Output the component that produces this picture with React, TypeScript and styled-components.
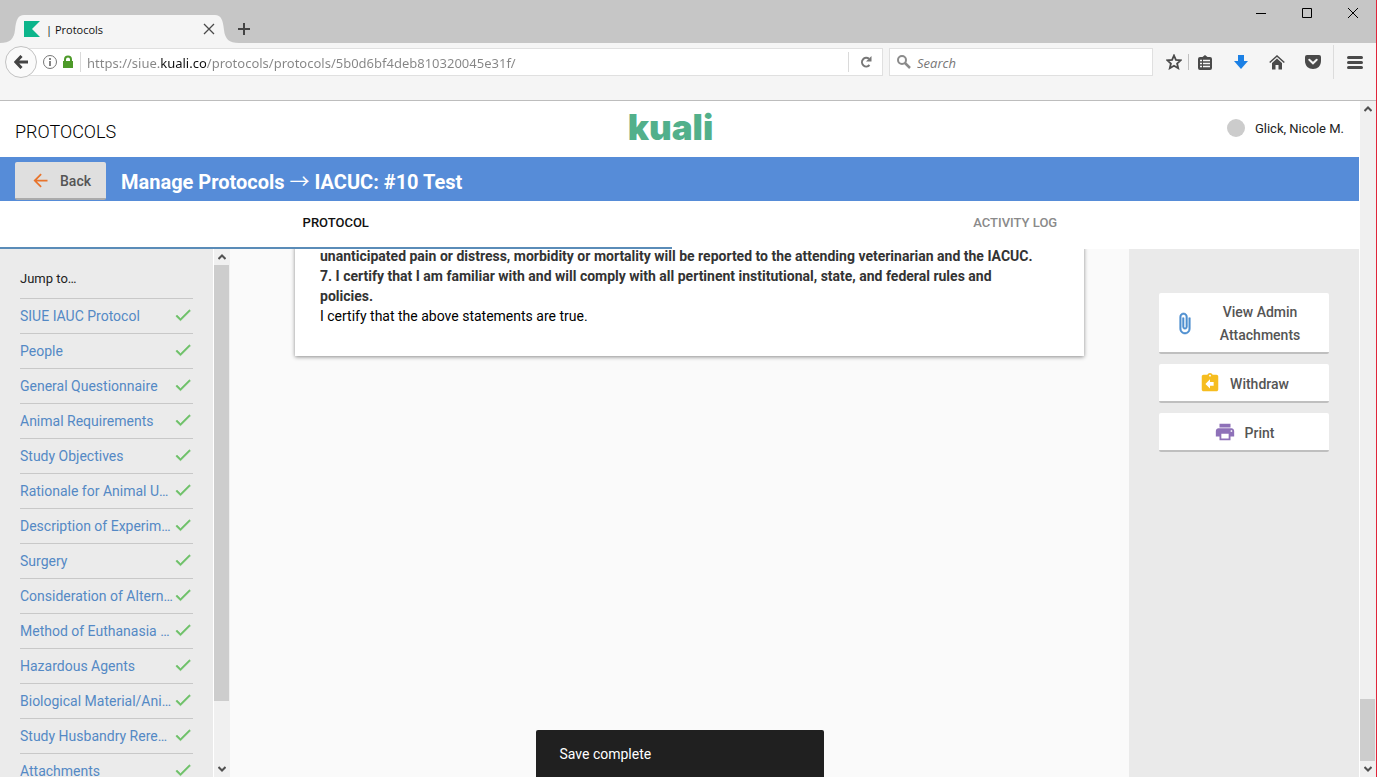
import React from 'react';
import styled, { createGlobalStyle, css } from 'styled-components';
import { MdArrowBack, MdAssignmentReturn, MdPrint } from 'react-icons/md';

const GlobalStyle = createGlobalStyle`
  *, *::before, *::after { box-sizing: border-box; }
  body { margin: 0; overflow: hidden; font-family: Roboto, "Liberation Sans", sans-serif; font-size: 14px; color: #222; }
  button { font: inherit; cursor: pointer; }
  ul { list-style: none; margin: 0; padding: 0; }
`;

const chromeFont = css`
  font-family: "Open Sans", "Noto Sans", sans-serif;
`;

const Frame = styled.div`
  display: flex;
  flex-direction: column;
  height: 100vh;
  border-right: 1px solid #e0253a;
  background: #fff;
`;

/* Browser window */

const TabStrip = styled.div`
  ${chromeFont}
  display: flex;
  align-items: flex-end;
  flex: none;
  height: 43px;
  background: #c6c6c6;
`;

const TabEdge = styled.svg<{ $flip?: boolean }>`
  flex: none;
  width: 24px;
  height: 28px;
  fill: #f5f5f5;
  transform: ${(p) => (p.$flip ? 'scaleX(-1)' : 'none')};
`;

const BrowserTab = styled.div`
  display: flex;
  align-items: center;
  width: 191px;
  height: 28px;
  background: #f5f5f5;
  font-size: 11px;
  color: #111;
`;

const TabTitle = styled.span`
  flex: 1;
  margin-left: 6px;
`;

const BareButton = styled.button`
  display: flex;
  align-items: center;
  justify-content: center;
  flex: none;
  padding: 0;
  border: 0;
  background: none;
  color: #4a4a4a;
`;

const NewTabButton = styled(BareButton)`
  width: 20px;
  height: 28px;
  margin-left: -5px;
`;

const WindowControls = styled.div`
  display: flex;
  align-self: flex-start;
  margin-left: auto;
`;

const WindowButton = styled(BareButton)`
  width: 46px;
  height: 26px;
  color: #000;
`;

const NavBar = styled.div`
  ${chromeFont}
  display: flex;
  align-items: flex-start;
  flex: none;
  height: 58px;
  padding: 5px 0 0 5px;
  border-bottom: 1px solid #bdbdbd;
  background: #f5f5f5;
`;

const BackCircle = styled(BareButton)`
  z-index: 1;
  width: 32px;
  height: 32px;
  margin: -2px -16px 0 0;
  border: 1px solid #c2c2c2;
  border-radius: 50%;
  background: #fafafa;
`;

const Field = styled.div`
  display: flex;
  align-items: center;
  min-width: 0;
  height: 28px;
  border: 1px solid #e0e0e0;
  background: #fff;
`;

const AddressField = styled(Field)`
  flex: 1;
  padding-left: 20px;
  margin-right: 6px;
`;

const SearchField = styled(Field)`
  flex: none;
  width: 264px;
  padding-left: 7px;
`;

const FieldRule = styled.span`
  flex: none;
  width: 1px;
  height: 20px;
  background: #dadada;
`;

const FieldInput = styled.input`
  flex: 1;
  min-width: 0;
  height: 26px;
  margin-left: 6px;
  padding: 2px 0 0;
  border: 0;
  outline: 0;
  background: none;
  font: inherit;
  font-size: 13px;
`;

/* The host name is darker than the rest of the address. */
const AddressInput = styled(FieldInput)`
  font-family: "Noto Sans", "Open Sans", sans-serif;
  color: #777;
  background: linear-gradient(90deg, #858585 73px, #111 73px, #111 119px, #858585 119px);
  background-clip: text;
  -webkit-background-clip: text;
  -webkit-text-fill-color: transparent;
`;

const SearchInput = styled(FieldInput)`
  font-style: italic;
  &::placeholder { color: #777; opacity: 1; }
`;

const ReloadButton = styled(BareButton)`
  width: 33px;
  height: 26px;
  color: #777;
`;

const ToolButtons = styled.div`
  display: flex;
  align-items: center;
  height: 28px;
  padding-left: 6px;
`;

const ToolButton = styled(BareButton)<{ $w: number }>`
  width: ${(p) => p.$w}px;
  height: 28px;
`;

const ToolRule = styled.span<{ $tall?: boolean }>`
  flex: none;
  width: 1px;
  height: ${(p) => (p.$tall ? 34 : 16)}px;
  background: ${(p) => (p.$tall ? '#dcdcdc' : '#c0c0c0')};
`;

/* Scroll bars */

const Scrollbar = styled.div`
  display: flex;
  flex-direction: column;
  align-items: center;
  flex: none;
  width: 17px;
  border: solid #fff;
  border-width: 0 0 0 1px;
  background: #f0f0f0;
`;

const ScrollArrow = styled(BareButton)`
  width: 16px;
  height: 16px;
  color: #505050;
`;

const ScrollTrack = styled.div<{ $end?: boolean }>`
  display: flex;
  flex: 1;
  align-self: stretch;
  flex-direction: column;
  justify-content: ${(p) => (p.$end ? 'flex-end' : 'flex-start')};
`;

const ScrollThumb = styled.div<{ $share: number }>`
  height: calc(100% * ${(p) => p.$share});
  margin-right: 1px;
  background: #cdcdcd;
`;

/* Application */

const Viewport = styled.div`
  display: flex;
  flex: 1;
  min-height: 0;
`;

const Page = styled.div`
  position: relative;
  display: flex;
  flex: 1;
  flex-direction: column;
  min-width: 0;
`;

const Header = styled.header`
  display: grid;
  grid-template-columns: 1fr auto 1fr;
  align-items: center;
  flex: none;
  height: 56px;
  padding: 0 15px;
`;

const AppName = styled.div`
  padding-top: 4px;
  font-size: 18px;
  font-weight: 300;
  color: #000;
`;

const Logo = styled.div`
  padding: 0 18px 4px 0;
  font-family: Inter, sans-serif;
  font-size: 35px;
  font-weight: 900;
  line-height: 44px;
  color: #52b08b;
`;

const User = styled.div`
  display: flex;
  align-items: center;
  justify-self: end;
  gap: 10px;
  padding-bottom: 2px;
  font-size: 13px;
`;

const Avatar = styled.span`
  width: 18px;
  height: 18px;
  border-radius: 50%;
  background: #ccc;
`;

const TitleBar = styled.div`
  display: flex;
  align-items: flex-start;
  flex: none;
  gap: 15px;
  height: 44px;
  padding: 5px 15px 0;
  background: #568cd8;
`;

const raised = css`
  display: flex;
  align-items: center;
  border: 0;
  border-radius: 2px;
  font-size: 14px;
  font-weight: 500;
  color: #555;
  svg { flex: none; margin-bottom: 2px; }
`;

const BackButton = styled.button`
  ${raised}
  gap: 9px;
  height: 38px;
  padding: 2px 15px 0;
  border-bottom: 2px solid #ababab;
  background: #dfdfdf;
  svg { color: #e8742c; }
`;

const Title = styled.h1`
  margin: 0;
  font-size: 20px;
  font-weight: 700;
  line-height: 40px;
  color: #fff;
`;

const Arrow = styled.span`
  font-family: "Noto Sans CJK JP", sans-serif;
  font-weight: 400;
  line-height: 20px;
`;

const Tabs = styled.nav`
  display: flex;
  flex: none;
  height: 48px;
`;

const Tab = styled.a<{ $active?: boolean }>`
  flex: 1;
  margin-right: 8px;
  border-bottom: 2px solid ${(p) => (p.$active ? '#5a8cb8' : 'transparent')};
  font-size: 13px;
  font-weight: 500;
  line-height: 44px;
  text-align: center;
  text-decoration: none;
  color: ${(p) => (p.$active ? '#111' : '#8a8a8a')};
`;

const Columns = styled.div`
  display: flex;
  flex: 1;
  min-height: 0;
`;

const Sidebar = styled.aside`
  flex: none;
  width: 213px;
  padding: 10px 20px 0;
  overflow: hidden;
  background: #ebebeb;
`;

const JumpHeading = styled.div`
  height: 40px;
  border-bottom: 1px solid #c8c8c8;
  font-size: 13px;
  line-height: 40px;
`;

const JumpItem = styled.li`
  display: flex;
  align-items: center;
  justify-content: space-between;
  height: 35px;
  border-bottom: 1px solid #c8c8c8;
  svg { flex: none; margin-bottom: 2px; }
`;

const JumpLink = styled.a`
  white-space: nowrap;
  text-decoration: none;
  color: #5489c5;
`;

const Main = styled.main`
  flex: 1;
  min-width: 0;
  padding: 0 45px 0 65px;
  overflow: hidden;
  background: #fafafa;
`;

const Card = styled.section`
  margin-top: -3px;
  padding: 0 40px 30px 25px;
  background: #fff;
  box-shadow: 0 1px 4px rgba(0, 0, 0, 0.45);
  line-height: 20px;
`;

const Clause = styled.p<{ $bold?: boolean }>`
  margin: 0;
  font-weight: ${(p) => (p.$bold ? 700 : 400)};
  color: ${(p) => (p.$bold ? '#333' : '#000')};
`;

const Actions = styled.aside`
  display: flex;
  flex-direction: column;
  flex: none;
  gap: 10px;
  width: 230px;
  padding: 44px 30px 0;
  background: #eaeaea;
`;

const ActionButton = styled.button<{ $tint: string }>`
  ${raised}
  justify-content: center;
  gap: 9px;
  min-height: 39px;
  padding: 8px 15px 5px;
  border-bottom: 2px solid #bfbfbf;
  background: #fff;
  line-height: 23px;
  svg { color: ${(p) => p.$tint}; }
`;

const WrappedLabel = styled.span`
  flex: 1;
  padding: 0 15px;
`;

const Toast = styled.div`
  position: absolute;
  bottom: 0;
  left: 50%;
  width: 288px;
  height: 47px;
  padding: 0 24px;
  transform: translateX(-50%);
  border-radius: 2px 2px 0 0;
  background: #202020;
  line-height: 49px;
  color: #fff;
`;

const sections = [
  'SIUE IAUC Protocol',
  'People',
  'General Questionnaire',
  'Animal Requirements',
  'Study Objectives',
  'Rationale for Animal U…',
  'Description of Experim…',
  'Surgery',
  'Consideration of Altern…',
  'Method of Euthanasia …',
  'Hazardous Agents',
  'Biological Material/Ani…',
  'Study Husbandry Rere…',
  'Attachments',
];

function CheckIcon() {
  return (
    <svg width="20" height="20" viewBox="0 0 24 24" fill="#6cc067" stroke="#6cc067" strokeWidth="0.6">
      <path d="M9 16.17L4.830 12L3.410 13.410L9 19L21 7L19.590 5.590Z" />
    </svg>
  );
}

function PaperclipIcon() {
  return (
    <svg width="23" height="23" viewBox="0 0 24 24" fill="currentColor" stroke="currentColor" strokeWidth="0.6">
      <path d="M16.5 6v11.5c0 2.210-1.790 4-4 4s-4-1.790-4-4V5a2.500 2.500 0 0 1 5 0v10.500c0 .55-.45 1-1 1s-1-.45-1-1V6H10v9.500a2.500 2.500 0 0 0 5 0V5c0-2.210-1.790-4-4-4S7 2.790 7 5v12.500c0 3.040 2.460 5.500 5.500 5.500s5.500-2.460 5.500-5.500V6h-1.500z" />
    </svg>
  );
}

function Chevron({ down }: { down?: boolean }) {
  return (
    <svg width="8" height="6" viewBox="0 0 8 6" fill="none" stroke="currentColor" strokeWidth="2">
      <path d={down ? 'M0.5 1L4 4.5L7.5 1' : 'M0.5 5L4 1.5L7.5 5'} />
    </svg>
  );
}

function ScrollBar({ share, end }: { share: number; end?: boolean }) {
  return (
    <Scrollbar>
      <ScrollArrow aria-label="Scroll up"><Chevron /></ScrollArrow>
      <ScrollTrack $end={end}><ScrollThumb $share={share} /></ScrollTrack>
      <ScrollArrow aria-label="Scroll down"><Chevron down /></ScrollArrow>
    </Scrollbar>
  );
}

function BrowserChrome() {
  return (
    <>
      <TabStrip>
        <TabEdge viewBox="0 0 24 28"><path d="M0 28C10 28 14 24 15 15C16 5 18 0 24 0V28Z" /></TabEdge>
        <BrowserTab>
          <svg width="16" height="16" viewBox="0 0 16 16"><path d="M0 0H16L8 8L16 16H0Z" fill="#0cb58b" /></svg>
          <TabTitle>| Protocols</TabTitle>
          <BareButton aria-label="Close tab">
            <svg width="12" height="12" viewBox="0 0 12 12" stroke="currentColor" strokeWidth="1.3"><path d="M1 1L11 11M11 1L1 11" /></svg>
          </BareButton>
        </BrowserTab>
        <TabEdge $flip viewBox="0 0 24 28"><path d="M0 28C10 28 14 24 15 15C16 5 18 0 24 0V28Z" /></TabEdge>
        <NewTabButton aria-label="New tab">
          <svg width="12" height="12" viewBox="0 0 12 12" stroke="#444" strokeWidth="2"><path d="M6 0V12M0 6H12" /></svg>
        </NewTabButton>
        <WindowControls>
          <WindowButton aria-label="Minimize"><svg width="10" height="10" stroke="currentColor"><path d="M0 5.5H10" /></svg></WindowButton>
          <WindowButton aria-label="Maximize"><svg width="10" height="10" fill="none" stroke="currentColor"><path d="M.5 .5H9.5V9.5H.5Z" /></svg></WindowButton>
          <WindowButton aria-label="Close"><svg width="10" height="10" stroke="currentColor"><path d="M0 0L10 10M10 0L0 10" /></svg></WindowButton>
        </WindowControls>
      </TabStrip>
      <NavBar>
        <BackCircle aria-label="Go back">
          <svg width="14" height="14" viewBox="0 0 14 14" fill="none" stroke="#444" strokeWidth="3"><path d="M7.5 1L1.8 7L7.5 13M2 7H14" /></svg>
        </BackCircle>
        <AddressField>
          <BareButton aria-label="Site information">
            <svg width="16" height="16" viewBox="0 0 16 16" fill="none" stroke="#777"><circle cx="8" cy="8" r="6.5" /><path d="M8 7V12M8 4V6" strokeWidth="1.8" /></svg>
          </BareButton>
          <BareButton aria-label="Secure connection">
            <svg width="22" height="14" viewBox="0 0 22 14"><path d="M5 6H15V13H5Z" fill="#4d9a29" /><path d="M7 7V4.5C7 .6 13 .6 13 4.5V7" fill="none" stroke="#4d9a29" strokeWidth="2" /></svg>
          </BareButton>
          <FieldRule />
          <AddressInput aria-label="Address" defaultValue="https://siue.kuali.co/protocols/protocols/5b0d6bf4deb810320045e31f/" />
          <FieldRule />
          <ReloadButton aria-label="Reload">
            <svg width="12" height="12" viewBox="0 0 12 12"><path d="M9 2.8A4.3 4.3 0 1 0 9.5 9" fill="none" stroke="currentColor" strokeWidth="2" /><path d="M11.5 0V5.5H6Z" fill="currentColor" /></svg>
          </ReloadButton>
        </AddressField>
        <SearchField>
          <svg width="14" height="14" viewBox="0 0 14 14" fill="none" stroke="#8b8b8b"><circle cx="5" cy="5" r="4" strokeWidth="2" /><path d="M8 8L13 13" strokeWidth="2.5" /></svg>
          <SearchInput aria-label="Search" placeholder="Search" />
        </SearchField>
        <ToolButtons>
          <ToolButton $w={29} aria-label="Bookmark this page">
            <svg width="16" height="16" viewBox="0 0 16 16" fill="none" stroke="#4a4a4a" strokeWidth="1.8"><path d="M8 1.5L9.9 5.9L14.7 6.3L11.1 9.5L12.2 14.2L8 11.7L3.8 14.2L4.9 9.5L1.3 6.3L6.1 5.9Z" /></svg>
          </ToolButton>
          <ToolRule />
          <ToolButton $w={32} aria-label="Library">
            <svg width="14" height="15" viewBox="0 0 14 15"><path d="M2 2H4.5L7 0L9.5 2H12Q14 2 14 4V13Q14 15 12 15H2Q0 15 0 13V4Q0 2 2 2Z" fill="#4a4a4a" /><path d="M2 5.5H4M5 5.5H12M2 8.5H4M5 8.5H12M2 11.5H4M5 11.5H12" stroke="#f5f5f5" strokeWidth="1.6" /></svg>
          </ToolButton>
          <ToolButton $w={40} aria-label="Downloads">
            <svg width="14" height="14" viewBox="0 0 14 14"><path d="M4 0H10V6H14L7 14L0 6H4Z" fill="#1b80e5" /></svg>
          </ToolButton>
          <ToolButton $w={32} aria-label="Home">
            <svg width="16" height="15" viewBox="0 0 16 15"><path d="M.7 7.5L8 1L15.3 7.5" fill="none" stroke="#4a4a4a" strokeWidth="1.5" /><path d="M8 3.5L13 8V14.5H9.5V10H6.5V14.5H3V8Z" fill="#4a4a4a" /></svg>
          </ToolButton>
          <ToolButton $w={40} aria-label="Save to Pocket">
            <svg width="16" height="14" viewBox="0 0 16 14"><path d="M2 0H14Q16 0 16 2V6C16 11 12.5 14 8 14C3.5 14 0 11 0 6V2Q0 0 2 0Z" fill="#4a4a4a" /><path d="M4.3 4.8L8 8.3L11.7 4.8" fill="none" stroke="#f5f5f5" strokeWidth="2" strokeLinecap="round" /></svg>
          </ToolButton>
          <ToolRule $tall />
          <ToolButton $w={42} aria-label="Open menu">
            <svg width="16" height="13" viewBox="0 0 16 13" stroke="#4a4a4a" strokeWidth="3" strokeLinecap="round"><path d="M1.5 1.5H14.5M1.5 6.5H14.5M1.5 11.5H14.5" /></svg>
          </ToolButton>
        </ToolButtons>
      </NavBar>
    </>
  );
}

export default function App() {
  return (
    <Frame>
      <GlobalStyle />
      <BrowserChrome />
      <Viewport>
        <Page>
          <Header>
            <AppName>PROTOCOLS</AppName>
            <Logo>kuali</Logo>
            <User><Avatar />Glick, Nicole M.</User>
          </Header>
          <TitleBar>
            <BackButton><MdArrowBack size={21} />Back</BackButton>
            <Title>Manage Protocols <Arrow>→</Arrow> IACUC: #10 Test</Title>
          </TitleBar>
          <Tabs>
            <Tab $active href="#protocol">PROTOCOL</Tab>
            <Tab href="#activity">ACTIVITY LOG</Tab>
          </Tabs>
          <Columns>
            <Sidebar>
              <JumpHeading>Jump to…</JumpHeading>
              <ul>
                {sections.map((name) => (
                  <JumpItem key={name}>
                    <JumpLink href="#section">{name}</JumpLink>
                    <CheckIcon />
                  </JumpItem>
                ))}
              </ul>
            </Sidebar>
            <ScrollBar share={0.88} />
            <Main>
              <Card>
                <Clause $bold>unanticipated pain or distress, morbidity or mortality will be reported to the attending veterinarian and the IACUC.</Clause>
                <Clause $bold>7. I certify that I am familiar with and will comply with all pertinent institutional, state, and federal rules and policies.</Clause>
                <Clause>I certify that the above statements are true.</Clause>
              </Card>
            </Main>
            <Actions>
              <ActionButton $tint="#4f8fd0"><PaperclipIcon /><WrappedLabel>View Admin Attachments</WrappedLabel></ActionButton>
              <ActionButton $tint="#f6bd1f"><MdAssignmentReturn size={22} />Withdraw</ActionButton>
              <ActionButton $tint="#8e71b8"><MdPrint size={22} />Print</ActionButton>
            </Actions>
          </Columns>
          <Toast role="status">Save complete</Toast>
        </Page>
        <ScrollBar share={0.096} end />
      </Viewport>
    </Frame>
  );
}
